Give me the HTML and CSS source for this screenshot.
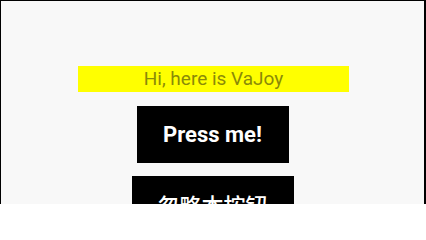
FILE: index.html
```html
<!DOCTYPE html>
<html>
<head>
<meta charset="utf-8">
<link rel="stylesheet" href="styles.css">
</head>
<body>
<div class="frame">
  <div class="banner">Hi, here is VaJoy</div>
  <button class="btn btn-press">Press me!</button>
  <button class="btn btn-ignore">忽略本按钮</button>
</div>
</body>
</html>
```

FILE: styles.css
```css
html, body {
  margin: 0;
  padding: 0;
  height: 204px;
  overflow: hidden;
}
.frame {
  box-sizing: border-box;
  height: 204px;
  overflow: hidden;
  border-top: 1px solid #000;
  border-left: 1px solid #000;
  border-right: 2px solid #000;
  background: #f8f8f8;
  display: flex;
  flex-direction: column;
  align-items: center;
  padding-top: 65px;
}
.banner {
  width: 271px;
  height: 26px;
  background: #ffff00;
  color: #8a8a08;
  font-family: Roboto, "Noto Sans", sans-serif;
  font-size: 19px;
  line-height: 26px;
  text-align: center;
  margin-left: 2px;
  flex-shrink: 0;
}
.btn {
  border: none;
  background: #000;
  color: #fff;
  padding: 0;
  font-weight: bold;
  font-family: Roboto, "Noto Sans CJK SC", sans-serif;
  flex-shrink: 0;
}
.btn-press {
  width: 152px;
  height: 57px;
  margin-top: 14px;
  font-size: 22px;
}
.btn-ignore {
  width: 162px;
  margin-top: 13px;
  padding: 17px 0 18px;
  font-size: 22px;
  line-height: 22px;
  font-weight: 500;
  font-family: "Noto Sans CJK SC", sans-serif;
}
```
